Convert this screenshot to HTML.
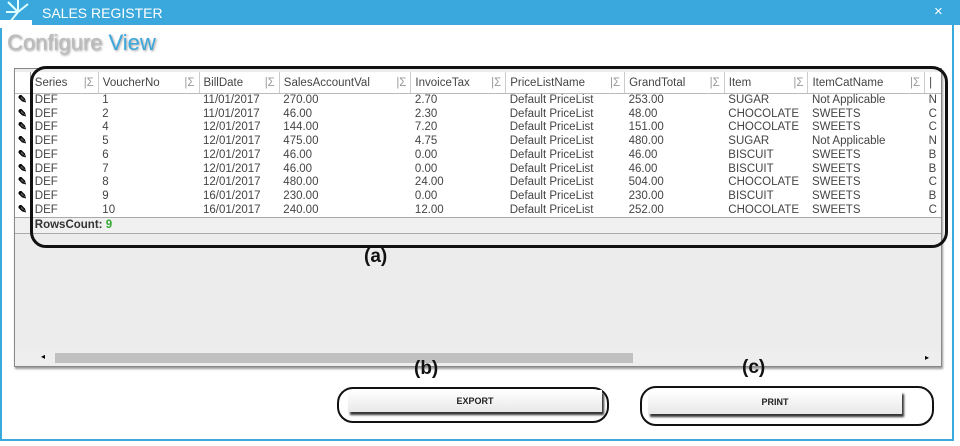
<!DOCTYPE html>
<html><head><style>
body{margin:0;width:960px;height:446px;background:#fff;font-family:"Liberation Sans",sans-serif;position:relative;overflow:hidden}
.abs{position:absolute}
#win{left:0;top:0;width:954px;height:441px;border:2px solid #3ca9dc;box-sizing:border-box}
#title{left:0;top:0;width:960px;height:25px;background:#3aa8dc;color:#fff;font-size:14px}
#grid{left:14px;top:68px;width:928px;height:299px;background:#ececec;border:1px solid #888;box-sizing:border-box;box-shadow:1px 2px 2px #999}
table{border-collapse:collapse;font-size:11.5px;color:#444;position:absolute;left:0;top:3px;background:#fff}
td{padding:0 0 0 4px;height:13.7px;line-height:13.7px;white-space:nowrap;overflow:hidden}
th{font-weight:normal;text-align:left;padding:0 4px;height:21px;border-right:1px solid #ccc;border-bottom:1px solid #bbb;font-size:11.5px;color:#444;background:#fff;white-space:nowrap}
th span{float:right;color:#999}
.rh{width:15px;padding:0;border-right:1px solid #999;text-align:center;font-size:11px;font-weight:bold;color:#000}
.btn{background:linear-gradient(#fff,#e8e8e8);box-shadow:2px 3px 2px #333;font-size:9px;font-weight:bold;color:#222;text-align:center}
.ring{border:2px solid #111;border-radius:14px}
.lbl{font-size:19px;font-weight:bold;color:#111}
</style></head><body>
<div id="win" class="abs"></div>
<div id="title" class="abs"><span class="abs" style="left:42px;top:5px">SALES REGISTER</span><span class="abs" style="left:934px;top:3px;font-size:15px">×</span>
<svg class="abs" style="left:4px;top:0" width="28" height="25"><g stroke="#dff" stroke-width="2"><line x1="14" y1="12" x2="4" y2="2"/><line x1="14" y1="12" x2="14" y2="0"/><line x1="14" y1="12" x2="24" y2="4"/><line x1="14" y1="12" x2="2" y2="12"/><line x1="14" y1="12" x2="6" y2="22"/></g></svg></div>
<div class="abs" style="left:0;top:20px;width:32px;height:8px;background:#fff"></div>
<div class="abs" style="left:7px;top:30px;font-size:22px;color:#bbb;text-shadow:1px 1px 2px #999">Configure <span style="color:#3aa8dc">View</span></div>
<div id="grid" class="abs">
<table>
<tr><th class="rh" style="height:21px"></th><th style="width:60px">Series<span>|Σ</span></th><th style="width:93px">VoucherNo<span>|Σ</span></th><th style="width:72px">BillDate<span>|Σ</span></th><th style="width:124px">SalesAccountVal<span>|Σ</span></th><th style="width:87px">InvoiceTax<span>|Σ</span></th><th style="width:111px">PriceListName<span>|Σ</span></th><th style="width:92px">GrandTotal<span>|Σ</span></th><th style="width:75px">Item<span>|Σ</span></th><th style="width:109px">ItemCatName<span>|Σ</span></th><th style="width:8px;border-right:none">|</th></tr>
<tr><td class="rh">✎</td><td>DEF</td><td>1</td><td>11/01/2017</td><td>270.00</td><td>2.70</td><td>Default PriceList</td><td>253.00</td><td>SUGAR</td><td>Not Applicable</td><td>N</td></tr>
<tr><td class="rh">✎</td><td>DEF</td><td>2</td><td>11/01/2017</td><td>46.00</td><td>2.30</td><td>Default PriceList</td><td>48.00</td><td>CHOCOLATE</td><td>SWEETS</td><td>C</td></tr>
<tr><td class="rh">✎</td><td>DEF</td><td>4</td><td>12/01/2017</td><td>144.00</td><td>7.20</td><td>Default PriceList</td><td>151.00</td><td>CHOCOLATE</td><td>SWEETS</td><td>C</td></tr>
<tr><td class="rh">✎</td><td>DEF</td><td>5</td><td>12/01/2017</td><td>475.00</td><td>4.75</td><td>Default PriceList</td><td>480.00</td><td>SUGAR</td><td>Not Applicable</td><td>N</td></tr>
<tr><td class="rh">✎</td><td>DEF</td><td>6</td><td>12/01/2017</td><td>46.00</td><td>0.00</td><td>Default PriceList</td><td>46.00</td><td>BISCUIT</td><td>SWEETS</td><td>B</td></tr>
<tr><td class="rh">✎</td><td>DEF</td><td>7</td><td>12/01/2017</td><td>46.00</td><td>0.00</td><td>Default PriceList</td><td>46.00</td><td>BISCUIT</td><td>SWEETS</td><td>B</td></tr>
<tr><td class="rh">✎</td><td>DEF</td><td>8</td><td>12/01/2017</td><td>480.00</td><td>24.00</td><td>Default PriceList</td><td>504.00</td><td>CHOCOLATE</td><td>SWEETS</td><td>C</td></tr>
<tr><td class="rh">✎</td><td>DEF</td><td>9</td><td>16/01/2017</td><td>230.00</td><td>0.00</td><td>Default PriceList</td><td>230.00</td><td>BISCUIT</td><td>SWEETS</td><td>B</td></tr>
<tr><td class="rh">✎</td><td>DEF</td><td>10</td><td>16/01/2017</td><td>240.00</td><td>12.00</td><td>Default PriceList</td><td>252.00</td><td>CHOCOLATE</td><td>SWEETS</td><td>C</td></tr>
<tr style="background:#f0f0f0;border-top:1px solid #aaa;border-bottom:1px solid #aaa"><td class="rh" style="background:#f0f0f0"></td><td colspan="10" style="font-weight:bold;color:#333;height:15px">RowsCount: <span style="color:#3a3">9</span></td></tr>
</table>
<div class="abs" style="left:0;top:282px;width:926px;height:14px;background:#eee"></div>
<div class="abs" style="left:40px;top:284px;width:578px;height:10px;background:#c0c0c0"></div>
<div class="abs" style="left:26px;top:283px;font-size:8px">◂</div>
<div class="abs" style="left:910px;top:284px;font-size:8px">▸</div>
</div>
<div class="abs ring" style="left:30px;top:66px;width:912px;height:176px;border-radius:16px;border-width:3px"></div>
<div class="abs lbl" style="left:364px;top:246px">(a)</div>
<div class="abs lbl" style="left:414px;top:358px">(b)</div>
<div class="abs lbl" style="left:742px;top:357px">(c)</div>
<div class="abs ring" style="left:337px;top:387px;width:268px;height:32px;border-radius:16px"></div>
<div class="abs btn" style="left:348px;top:390px;width:254px;height:22px;line-height:22px">EXPORT</div>
<div class="abs ring" style="left:640px;top:386px;width:290px;height:36px;border-radius:16px"></div>
<div class="abs btn" style="left:648px;top:391px;width:254px;height:23px;line-height:23px">PRINT</div>
</body></html>
